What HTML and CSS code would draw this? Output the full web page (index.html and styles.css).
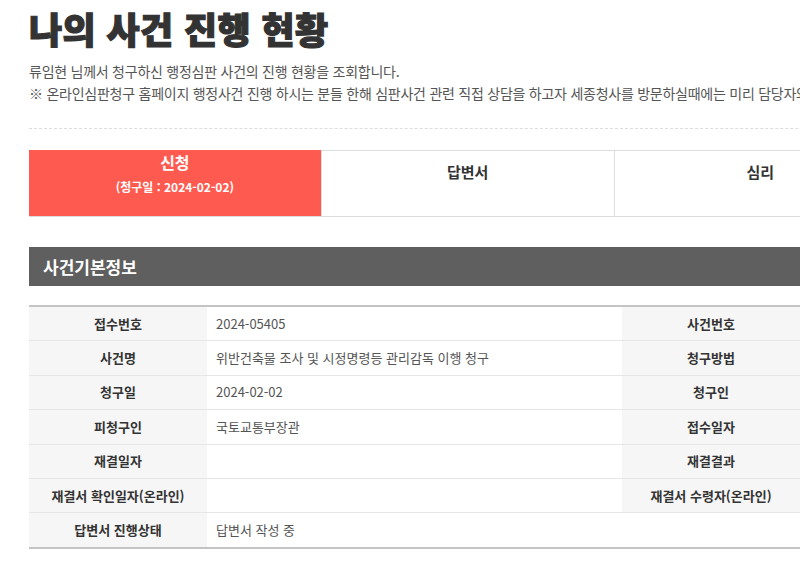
FILE: index.html
```html
<!DOCTYPE html>
<html lang="ko">
<head>
	<meta charset="UTF-8">
	<title>나의 사건 진행 현황</title>
	<link rel="stylesheet" href="styles.css">
</head>
<body>
	<div class="wrap">
		<h1 class="page-tit">나의 사건 진행 현황</h1>
		<div class="intro">
			<p>류임현 님께서 청구하신 행정심판 사건의 진행 현황을 조회합니다.</p>
			<p>※ 온라인심판청구 홈페이지 행정사건 진행 하시는 분들 한해 심판사건 관련 직접 상담을 하고자 세종청사를 방문하실때에는 미리 담당자와 일정을 협의하시기 바랍니다.</p>
		</div>

		<ul class="steps">
			<li class="on">
				<strong>신청</strong>
				<span>(청구일 : 2024-02-02)</span>
			</li>
			<li><strong>답변서</strong></li>
			<li><strong>심리</strong></li>
			<li><strong>재결</strong></li>
		</ul>

		<h2 class="sec-tit">사건기본정보</h2>

		<table class="info">
			<colgroup>
				<col class="c-th">
				<col class="c-td">
				<col class="c-th">
				<col>
			</colgroup>
			<tbody>
				<tr>
					<th>접수번호</th>
					<td>2024-05405</td>
					<th>사건번호</th>
					<td></td>
				</tr>
				<tr>
					<th>사건명</th>
					<td>위반건축물 조사 및 시정명령등 관리감독 이행 청구</td>
					<th>청구방법</th>
					<td></td>
				</tr>
				<tr>
					<th>청구일</th>
					<td>2024-02-02</td>
					<th>청구인</th>
					<td></td>
				</tr>
				<tr>
					<th>피청구인</th>
					<td>국토교통부장관</td>
					<th>접수일자</th>
					<td></td>
				</tr>
				<tr>
					<th>재결일자</th>
					<td></td>
					<th>재결결과</th>
					<td></td>
				</tr>
				<tr>
					<th>재결서 확인일자(온라인)</th>
					<td></td>
					<th>재결서 수령자(온라인)</th>
					<td></td>
				</tr>
				<tr>
					<th>답변서 진행상태</th>
					<td colspan="3">답변서 작성 중</td>
				</tr>
			</tbody>
		</table>
	</div>
</body>
</html>
```

FILE: styles.css
```css
html, body, h1, h2, p, ul, li {
	margin: 0;
	padding: 0;
}
body {
	overflow: hidden;
	background: #fff;
	color: #555;
	font-family: "Noto Sans CJK KR", "Noto Sans", sans-serif;
	font-size: 13px;
}
.wrap {
	width: 1170px;
	margin-left: 29px;
	padding-top: 6px;
}

.page-tit {
	font-size: 36px;
	font-weight: 900;
	line-height: 44px;
	color: #333;
	letter-spacing: 0.4px;
	-webkit-text-stroke: 1.2px #333;
}

.intro {
	margin-top: 10px;
	padding-bottom: 24px;
	border-bottom: 1px dashed #ddd;
}
.intro p {
	font-size: 14px;
	letter-spacing: -0.25px;
	line-height: 22px;
	white-space: nowrap;
}

.steps {
	display: flex;
	margin-top: 21px;
	border-top: 1px solid #ddd;
	border-bottom: 1px solid #ddd;
	list-style: none;
}
.steps li {
	flex: 1;
	height: 65px;
	padding-top: 9px;
	box-sizing: border-box;
	border-left: 1px solid #ddd;
	text-align: center;
}
.steps li:first-child {
	border-left: none;
}
.steps li strong {
	display: block;
	font-size: 15px;
	line-height: 24px;
	color: #333;
}
.steps li.on {
	margin-top: -1px;
	height: 66px;
	padding-top: 0;
	background: #ff5a4f;
}
.steps li.on strong {
	font-size: 16px;
	color: #fff;
}
.steps li.on span {
	display: block;
	margin-top: 1px;
	font-size: 12px;
	font-weight: 700;
	line-height: 24px;
	color: #fff;
}

.sec-tit {
	margin-top: 30px;
	height: 39px;
	padding-left: 14px;
	background: #5f5f5f;
	font-size: 17px;
	font-weight: 700;
	line-height: 39px;
	color: #fff;
}

.info {
	width: 100%;
	margin-top: 19px;
	border-collapse: collapse;
	table-layout: fixed;
	border-top: 2px solid #c4c4c4;
	border-bottom: 2px solid #c4c4c4;
}
.info .c-th {
	width: 178px;
}
.info .c-td {
	width: 415px;
}
.info th,
.info td {
	height: 33.4px;
	padding: 0;
	border-bottom: 1px solid #e6e6e6;
	font-size: 13px;
	line-height: 20px;
}
.info tr:last-child th,
.info tr:last-child td {
	border-bottom: none;
}
.info th {
	background: #f6f6f6;
	font-weight: 700;
	color: #333;
	text-align: center;
}
.info td {
	padding-left: 9px;
	color: #555;
	text-align: left;
}
```
